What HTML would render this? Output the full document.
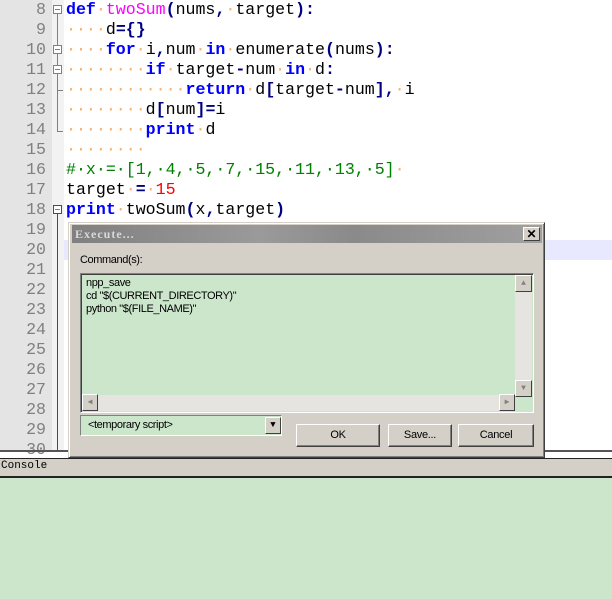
<!DOCTYPE html>
<html><head><style>
body{margin:0;width:612px;height:599px;overflow:hidden;background:#fff;position:relative;font-family:"Liberation Mono",monospace}
.g{position:absolute;left:0;top:0;width:52px;height:450px;background:#e4e4e4}
.f{position:absolute;left:52px;top:0;width:12px;height:450px;background:#f2f2f2}
.n{position:absolute;left:0;width:46px;text-align:right;font-size:16.6px;color:#808080;line-height:20px}
.l{position:absolute;left:66px;font-size:16.6px;line-height:20px;white-space:pre;color:#000}
.d{color:#f5b070}.k{color:#0000ff;font-weight:bold}.m{color:#ff00ff}.o{color:#000080;font-weight:bold}.c{color:#008000}.r{color:#ff0000}
.box{position:absolute;left:53px;width:9px;height:9px;border:1px solid #808080;background:#fff;box-sizing:border-box}
.box:after{content:"";position:absolute;left:1px;right:1px;top:3px;height:1px;background:#808080}
.ui{font-family:"Liberation Sans",sans-serif;font-size:11px;letter-spacing:-0.4px}
.btn{position:absolute;top:424px;height:23px;background:#d4d0c8;border:1px solid;border-color:#fff #404040 #404040 #fff;box-shadow:inset -1px -1px #808080;box-sizing:border-box;text-align:center;line-height:21px;font-family:"Liberation Sans",sans-serif;font-size:11px;letter-spacing:-0.3px}
.sb{position:absolute;background:#d4d0c8;border:1px solid;border-color:#fff #404040 #404040 #fff;box-sizing:border-box}
</style></head><body>
<div class="g"></div><div class="f"></div>
<div style="position:absolute;left:64px;top:240px;width:548px;height:20px;background:#e8e8ff"></div>
<div class="n" style="top:0">8</div><div class="n" style="top:20px">9</div><div class="n" style="top:40px">10</div><div class="n" style="top:60px">11</div><div class="n" style="top:80px">12</div><div class="n" style="top:100px">13</div><div class="n" style="top:120px">14</div><div class="n" style="top:140px">15</div><div class="n" style="top:160px">16</div><div class="n" style="top:180px">17</div><div class="n" style="top:200px">18</div><div class="n" style="top:220px">19</div><div class="n" style="top:240px">20</div><div class="n" style="top:260px">21</div><div class="n" style="top:280px">22</div><div class="n" style="top:300px">23</div><div class="n" style="top:320px">24</div><div class="n" style="top:340px">25</div><div class="n" style="top:360px">26</div><div class="n" style="top:380px">27</div><div class="n" style="top:400px">28</div><div class="n" style="top:420px">29</div><div class="n" style="top:440px">30</div>
<div style="position:absolute;left:57px;top:14px;width:1px;height:118px;background:#808080"></div>
<div style="position:absolute;left:57px;top:131px;width:6px;height:1px;background:#808080"></div>
<div style="position:absolute;left:57px;top:90px;width:6px;height:1px;background:#808080"></div>
<div style="position:absolute;left:57px;top:214px;width:1px;height:236px;background:#ff0000"></div>
<div class="box" style="top:5px"></div><div class="box" style="top:45px"></div><div class="box" style="top:65px"></div>
<div class="box" style="top:205px;border-color:#f00"></div>
<div class="l" style="top:0"><span class="k">def</span><span class="d">·</span><span class="m">twoSum</span><span class="o">(</span>nums<span class="o">,</span><span class="d">·</span>target<span class="o">):</span></div>
<div class="l" style="top:20px"><span class="d">····</span>d<span class="o">={}</span></div>
<div class="l" style="top:40px"><span class="d">····</span><span class="k">for</span><span class="d">·</span>i<span class="o">,</span>num<span class="d">·</span><span class="k">in</span><span class="d">·</span>enumerate<span class="o">(</span>nums<span class="o">):</span></div>
<div class="l" style="top:60px"><span class="d">········</span><span class="k">if</span><span class="d">·</span>target<span class="o">-</span>num<span class="d">·</span><span class="k">in</span><span class="d">·</span>d<span class="o">:</span></div>
<div class="l" style="top:80px"><span class="d">············</span><span class="k">return</span><span class="d">·</span>d<span class="o">[</span>target<span class="o">-</span>num<span class="o">],</span><span class="d">·</span>i</div>
<div class="l" style="top:100px"><span class="d">········</span>d<span class="o">[</span>num<span class="o">]=</span>i</div>
<div class="l" style="top:120px"><span class="d">········</span><span class="k">print</span><span class="d">·</span>d</div>
<div class="l" style="top:140px"><span class="d">········</span></div>
<div class="l" style="top:160px"><span class="c">#·x·=·[1,·4,·5,·7,·15,·11,·13,·5]</span><span class="d">·</span></div>
<div class="l" style="top:180px">target<span class="d">·</span><span class="o">=</span><span class="d">·</span><span class="r">15</span></div>
<div class="l" style="top:200px"><span class="k">print</span><span class="d">·</span>twoSum<span class="o">(</span>x<span class="o">,</span>target<span class="o">)</span></div>
<!-- dialog -->
<div style="position:absolute;left:68px;top:222px;width:477px;height:236px;background:#d4d0c8;border:1px solid;border-color:#d4d0c8 #404040 #404040 #d4d0c8;box-sizing:border-box;box-shadow:inset 1px 1px #fff,inset -1px -1px #808080"></div>
<div style="position:absolute;left:72px;top:225px;width:470px;height:18px;background:linear-gradient(90deg,#808080,#9a9a9a 40%,#8a8a8a 60%,#a0a0a0)"></div>
<div style="position:absolute;left:75px;top:227px;color:#d8d8d8;font-family:'Liberation Serif',serif;font-weight:bold;font-size:12px;letter-spacing:1px">Execute...</div>
<div class="sb" style="left:523px;top:227px;width:17px;height:14px;text-align:center;font:bold 12px/12px 'Liberation Sans',sans-serif">✕</div>
<div class="ui" style="position:absolute;left:80px;top:254px">Command(s):</div>
<div style="position:absolute;left:80px;top:273px;width:454px;height:140px;background:#cce6cc;border:1px solid;border-color:#808080 #fff #fff #808080;box-sizing:border-box;box-shadow:inset 1px 1px #404040"></div>
<div class="ui" style="position:absolute;left:86px;top:277px;line-height:13px">npp_save<br>cd "$(CURRENT_DIRECTORY)"<br>python "$(FILE_NAME)"</div>
<div style="position:absolute;left:515px;top:275px;width:17px;height:122px;background:#e6e4e0"></div>
<div class="sb" style="left:515px;top:275px;width:17px;height:17px;font-size:8px;text-align:center;color:#808080;line-height:15px">▲</div>
<div class="sb" style="left:515px;top:380px;width:17px;height:17px;font-size:8px;text-align:center;color:#808080;line-height:15px">▼</div>
<div style="position:absolute;left:82px;top:395px;width:433px;height:16px;background:#e6e4e0"></div>
<div class="sb" style="left:82px;top:394px;width:16px;height:17px;font-size:8px;color:#808080;line-height:15px;text-align:center">◀</div>
<div class="sb" style="left:499px;top:394px;width:16px;height:17px;font-size:8px;color:#808080;line-height:15px;text-align:center">▶</div>
<div style="position:absolute;left:80px;top:415px;width:202px;height:21px;background:#cce6cc;border:1px solid;border-color:#808080 #fff #fff #808080;box-sizing:border-box"></div>
<div class="ui" style="position:absolute;left:88px;top:419px">&lt;temporary script&gt;</div>
<div class="sb" style="left:265px;top:417px;width:16px;height:17px;font-size:9px;line-height:15px;text-align:center">▼</div>
<div class="btn" style="left:296px;width:84px">OK</div>
<div class="btn" style="left:388px;width:64px">Save...</div>
<div class="btn" style="left:458px;width:76px">Cancel</div>
<!-- console -->
<div style="position:absolute;left:0;top:450px;width:68px;height:2px;background:#555"></div>
<div style="position:absolute;left:545px;top:450px;width:67px;height:2px;background:#555"></div>
<div style="position:absolute;left:0;top:458px;width:612px;height:1px;background:#222"></div>
<div style="position:absolute;left:0;top:459px;width:612px;height:17px;background:#d4d0c8"></div>
<div style="position:absolute;left:1px;top:460px;font-size:11px;font-family:'Liberation Mono',monospace">Console</div>
<div style="position:absolute;left:0;top:476px;width:612px;height:2px;background:#222"></div>
<div style="position:absolute;left:0;top:478px;width:612px;height:121px;background:#cce6cc"></div>
</body></html>
